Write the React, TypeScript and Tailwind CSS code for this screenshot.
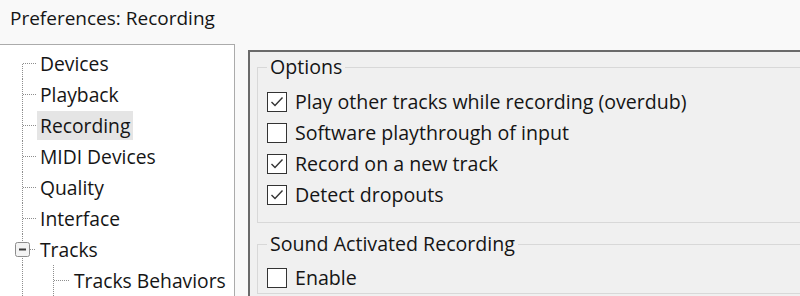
const font = { fontFamily: '"Open Sans", "Noto Sans", sans-serif' }

type Kind = 'first' | 'leaf' | 'expanded' | 'child'

function Connector({ kind }: { kind: Kind }) {
  const dot = { stroke: '#8e8e8e', strokeWidth: 1, strokeDasharray: '1 1' }
  return (
    <svg width={kind === 'child' ? 71 : 37} height={31} className="shrink-0">
      <line x1={22.5} y1={kind === 'first' ? 16 : 0} x2={22.5} y2={31} {...dot} />
      {kind === 'expanded' ? (
        <>
          <line x1={30} y1={15.5} x2={36} y2={15.5} {...dot} />
          <rect x={15.5} y={8.5} width={14} height={14} rx={2} fill="#f3f3f3" stroke="#8c8c8c" />
          <line x1={19} y1={15.5} x2={26} y2={15.5} stroke="#3c3c3c" strokeWidth={2} />
        </>
      ) : kind === 'child' ? (
        <>
          <line x1={53.5} y1={0} x2={53.5} y2={31} {...dot} />
          <line x1={54} y1={15.5} x2={69} y2={15.5} {...dot} />
        </>
      ) : (
        <line x1={23} y1={15.5} x2={36} y2={15.5} {...dot} />
      )}
    </svg>
  )
}

function TreeRow({ label, kind, selected }: { label: string; kind: Kind; selected?: boolean }) {
  return (
    <div className="flex h-[31px] items-center">
      <Connector kind={kind} />
      <span
        className={`h-[29px] px-[3px] leading-[29px] whitespace-nowrap ${selected ? 'bg-[#e5e5e5]' : ''}`}
      >
        {label}
      </span>
    </div>
  )
}

function CheckRow({ label, checked }: { label: string; checked?: boolean }) {
  return (
    <div className="flex h-[31px] items-center gap-[8px]">
      <span className="flex h-[20px] w-[20px] shrink-0 items-center justify-center border-[1.5px] border-[#333] bg-white">
        {checked && (
          <svg width={16} height={16} viewBox="0 0 16 16">
            <polyline points="2.5,8 6,11.5 13.5,3.5" fill="none" stroke="#333" strokeWidth={1.4} />
          </svg>
        )}
      </span>
      <span className="whitespace-nowrap leading-[31px]">{label}</span>
    </div>
  )
}

export default function App() {
  return (
    <div
      className="h-[296px] w-[800px] overflow-hidden bg-[#f9f9f9] text-[19px] text-[#151515]"
      style={font}
    >
      <div className="h-[44px] pl-[10px] pt-[6px] leading-[24px]">Preferences: Recording</div>

      <div className="flex">
        <div className="h-[252px] w-[235px] shrink-0 border-t border-r border-[#ababab] bg-white pt-[3px] text-[19.3px]">
          <TreeRow label="Devices" kind="first" />
          <TreeRow label="Playback" kind="leaf" />
          <TreeRow label="Recording" kind="leaf" selected />
          <TreeRow label="MIDI Devices" kind="leaf" />
          <TreeRow label="Quality" kind="leaf" />
          <TreeRow label="Interface" kind="leaf" />
          <TreeRow label="Tracks" kind="expanded" />
          <TreeRow label="Tracks Behaviors" kind="child" />
        </div>

        <div className="ml-[13px] mt-[6px] h-[246px] flex-1 border-t-2 border-l-2 border-[#6a6a6a] bg-[#f0f0f0] pl-[7px] pt-[5px] text-[19.6px]">
          <fieldset className="-mr-[10px] border border-[#d8d8d8] pb-[12px] pl-[9px]">
            <legend className="px-[3px] leading-[20px]">Options</legend>
            <div className="mt-[9px]">
              <CheckRow label="Play other tracks while recording (overdub)" checked />
              <CheckRow label="Software playthrough of input" />
              <CheckRow label="Record on a new track" checked />
              <CheckRow label="Detect dropouts" checked />
            </div>
          </fieldset>

          <fieldset className="-mr-[10px] mt-[11px] border border-[#d8d8d8] pl-[9px]">
            <legend className="px-[3px] leading-[20px]">Sound Activated Recording</legend>
            <div className="mt-[8px]">
              <CheckRow label="Enable" />
            </div>
          </fieldset>
        </div>
      </div>
    </div>
  )
}
